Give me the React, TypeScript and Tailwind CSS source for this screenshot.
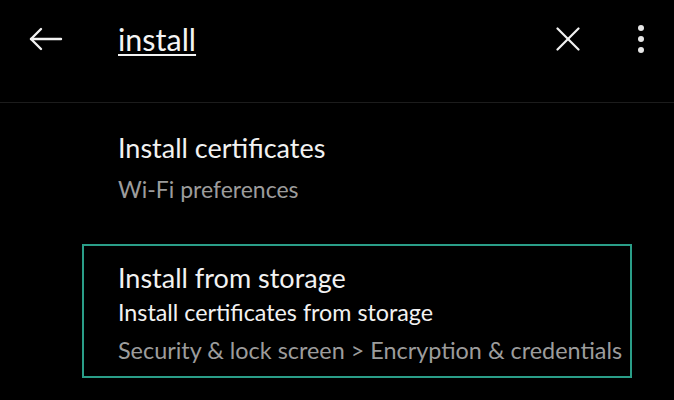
import React from "react";

const BackIcon = () => (
    <svg width="34" height="24" viewBox="0 0 34 24" fill="none" stroke="#f2f2f2" strokeWidth="2.4" strokeLinecap="round" strokeLinejoin="round">
        <path d="M2 12 H32" />
        <path d="M12 2 L2 12 L12 22" />
    </svg>
);

const CloseIcon = () => (
    <svg width="24" height="24" viewBox="0 0 24 24" fill="none" stroke="#f2f2f2" strokeWidth="2.2" strokeLinecap="round">
        <path d="M1.5 1.5 L22.5 22.5" />
        <path d="M22.5 1.5 L1.5 22.5" />
    </svg>
);

const MoreIcon = () => (
    <div className="flex flex-col items-center gap-[5px]">
        <span className="block w-[6px] h-[6px] rounded-full bg-[#e6e6e6]" />
        <span className="block w-[6px] h-[6px] rounded-full bg-[#e6e6e6]" />
        <span className="block w-[6px] h-[6px] rounded-full bg-[#e6e6e6]" />
    </div>
);

export default function App() {
    return (
        <div
            className="w-[674px] h-[400px] bg-black overflow-hidden text-white"
            style={{ fontFamily: "Lato, 'Open Sans', sans-serif" }}
        >
            {/* search bar */}
            <div className="h-[103px] border-b border-[#1c1c1c]">
                <div className="h-[78px] flex items-center">
                    <div className="w-[118px] pl-[29px] flex items-center">
                        <BackIcon />
                    </div>
                    <div className="flex-1 text-[30.5px] leading-none text-[#f4f4f4] underline underline-offset-[3px] decoration-[1.5px] pt-[1px]">
                        install
                    </div>
                    <div className="w-[24px] mr-[58px] flex items-center">
                        <CloseIcon />
                    </div>
                    <div className="w-[6px] mr-[30px] flex items-center">
                        <MoreIcon />
                    </div>
                </div>
            </div>

            {/* results */}
            <div className="pl-[118px] pt-[28px]">
                <div className="text-[27px] leading-[34px] text-[#f2f2f2]">Install certificates</div>
                <div className="mt-[9px] text-[23px] leading-[30px] text-[#9c9c9c]">Wi-Fi preferences</div>
            </div>

            <div className="ml-[82px] mt-[40px] w-[550px] h-[134px] border-2 border-[#2a9e88] pl-[34px] pt-[15px]">
                <div className="text-[27px] leading-[34px] text-[#f2f2f2]">Install from storage</div>
                <div className="text-[23.3px] leading-[34px] text-[#f2f2f2]">Install certificates from storage</div>
                <div className="mt-[6px] text-[23.4px] leading-[30px] text-[#9c9c9c]">Security &amp; lock screen &gt; Encryption &amp; credentials</div>
            </div>
        </div>
    );
}
